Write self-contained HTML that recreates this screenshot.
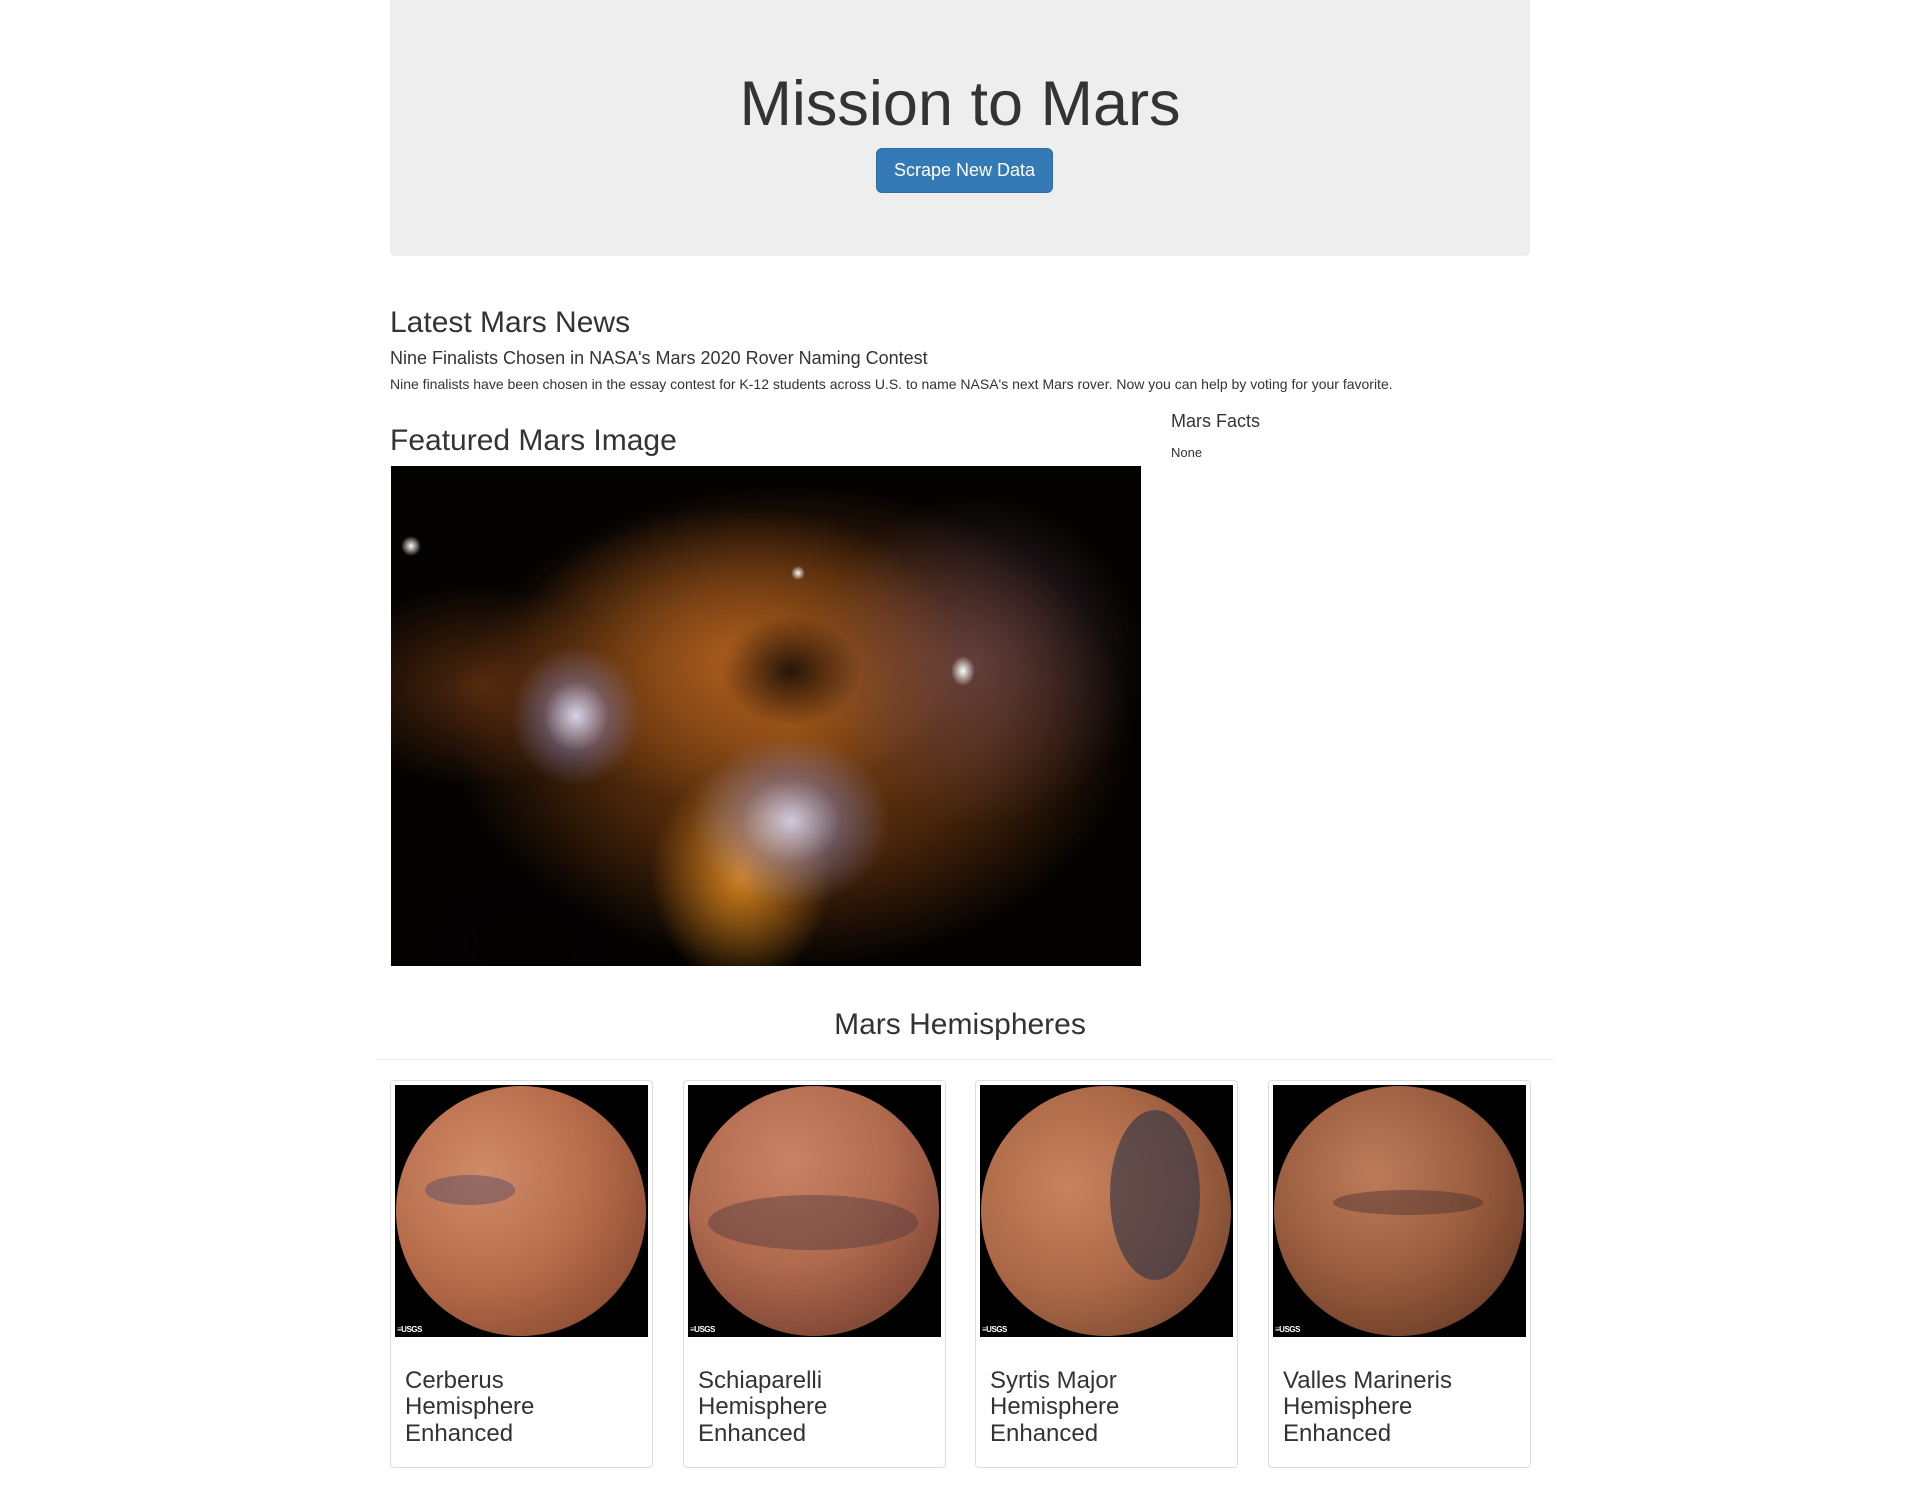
<!DOCTYPE html>
<html><head><meta charset="utf-8"><style>
*{box-sizing:border-box;margin:0;padding:0}
body{width:1920px;height:1488px;background:#fff;font-family:"Liberation Sans",Arial,sans-serif;color:#333;position:relative;overflow:hidden}
.a{position:absolute}
.jumbo{left:390px;top:0;width:1140px;height:256px;background:#eee;border-radius:0 0 6px 6px}
h1{position:absolute;left:0;width:100%;top:70px;text-align:center;font-size:63px;font-weight:400;line-height:69px}
.btn{position:absolute;left:486px;top:148px;width:177px;height:45px;background:#337ab7;border:1px solid #2e6da4;border-radius:6px;color:#fff;font-size:18px;line-height:43px;text-align:center}
h2{font-size:30px;font-weight:400;line-height:33px;position:absolute}
.neb{left:391px;top:466px;width:750px;height:500px;background:#050302;overflow:hidden}
.neb div{position:absolute;border-radius:50%}
.card{width:263px;height:388px;top:1080px;border:1px solid #ddd;border-radius:4px;background:#fff}
.card .img{position:absolute;left:4px;top:4px;width:253px;height:252px;background:#000;overflow:hidden}
.planet{position:absolute;left:1px;top:1px;width:250px;height:250px;border-radius:50%}
.usgs{position:absolute;left:2px;bottom:3px;color:#fff;font-size:8px;font-weight:bold;letter-spacing:-0.5px}
.card h3{position:absolute;left:14px;font-size:24px;font-weight:400;line-height:26.4px;top:287px}
</style></head><body>
<div class="a jumbo"><h1>Mission to Mars</h1><div class="btn">Scrape New Data</div></div>

<h2 style="left:390px;top:306px">Latest Mars News</h2>
<div class="a" style="left:390px;top:348px;font-size:18px;line-height:20px">Nine Finalists Chosen in NASA's Mars 2020 Rover Naming Contest</div>
<div class="a" style="left:390px;top:376px;font-size:14px;line-height:16px">Nine finalists have been chosen in the essay contest for K-12 students across U.S. to name NASA's next Mars rover. Now you can help by voting for your favorite.</div>

<h2 style="left:390px;top:424px">Featured Mars Image</h2>
<div class="a" style="left:1171px;top:411px;font-size:18px;line-height:20px">Mars Facts</div>
<div class="a" style="left:1171px;top:445px;font-size:13px;line-height:16px">None</div>

<div class="a neb">
<div style="left:60px;top:20px;width:680px;height:480px;background:radial-gradient(closest-side,rgba(160,85,22,.8),rgba(120,60,15,.55) 60%,rgba(0,0,0,0))"></div>
<div style="left:120px;top:40px;width:450px;height:300px;background:radial-gradient(closest-side,rgba(200,110,35,.7),rgba(0,0,0,0))"></div>
<div style="left:420px;top:30px;width:330px;height:330px;background:radial-gradient(closest-side,rgba(130,90,110,.5),rgba(0,0,0,0))"></div>
<div style="left:-60px;top:120px;width:300px;height:200px;background:radial-gradient(closest-side,rgba(130,65,20,.6),rgba(0,0,0,0))"></div>
<div style="left:260px;top:300px;width:180px;height:220px;background:radial-gradient(closest-side,rgba(235,145,30,.85),rgba(0,0,0,0))"></div>
<div style="left:300px;top:270px;width:200px;height:170px;background:radial-gradient(closest-side,rgba(225,225,255,.85),rgba(150,150,210,.4) 50%,rgba(0,0,0,0))"></div>
<div style="left:120px;top:180px;width:130px;height:140px;background:radial-gradient(closest-side,rgba(230,230,255,.9),rgba(140,140,200,.4) 50%,rgba(0,0,0,0))"></div>
<div style="left:330px;top:150px;width:140px;height:110px;background:radial-gradient(closest-side,rgba(10,5,3,.8),rgba(0,0,0,0))"></div>
<div style="left:10px;top:70px;width:20px;height:20px;background:radial-gradient(closest-side,#fff,rgba(255,255,200,0))"></div>
<div style="left:400px;top:100px;width:14px;height:14px;background:radial-gradient(closest-side,#fff,rgba(255,255,200,0))"></div>
<div style="left:560px;top:190px;width:24px;height:30px;background:radial-gradient(closest-side,#fff,rgba(200,200,255,0))"></div>
<div style="left:0;top:380px;width:260px;height:200px;background:radial-gradient(closest-side,rgba(0,0,0,.5),rgba(0,0,0,0))"></div>
</div>

<h2 style="left:0;width:1920px;text-align:center;top:1008px">Mars Hemispheres</h2>
<div class="a" style="left:377px;top:1059px;width:1176px;height:1px;background:#eee"></div>

<div class="a card" style="left:390px"><div class="img"><div class="planet" style="background:radial-gradient(circle at 35% 35%,#d08a68,#b86e4c 45%,#8a4a30 85%,#4a2414)"></div><div class="a" style="left:30px;top:90px;width:90px;height:30px;border-radius:50%;background:rgba(80,70,100,.45)"></div><span class="usgs">≡USGS</span></div><h3>Cerberus<br>Hemisphere<br>Enhanced</h3></div>
<div class="a card" style="left:683px"><div class="img"><div class="planet" style="background:radial-gradient(circle at 40% 30%,#c98266,#b06a4e 45%,#7a4232 85%,#3e2014)"></div><div class="a" style="left:20px;top:110px;width:210px;height:55px;border-radius:50%;background:rgba(70,50,60,.4)"></div><span class="usgs">≡USGS</span></div><h3>Schiaparelli<br>Hemisphere<br>Enhanced</h3></div>
<div class="a card" style="left:975px"><div class="img"><div class="planet" style="background:radial-gradient(circle at 35% 40%,#c8825e,#ad6a48 45%,#7a4830 85%,#3a2216)"></div><div class="a" style="left:130px;top:25px;width:90px;height:170px;border-radius:50%;background:rgba(40,50,70,.6)"></div><span class="usgs">≡USGS</span></div><h3>Syrtis Major<br>Hemisphere<br>Enhanced</h3></div>
<div class="a card" style="left:1268px"><div class="img"><div class="planet" style="background:radial-gradient(circle at 40% 35%,#bc7c5c,#9c5e40 45%,#6a3c26 85%,#301a10)"></div><div class="a" style="left:60px;top:105px;width:150px;height:25px;border-radius:50%;background:rgba(60,40,40,.4)"></div><span class="usgs">≡USGS</span></div><h3>Valles Marineris<br>Hemisphere<br>Enhanced</h3></div>
</body></html>
